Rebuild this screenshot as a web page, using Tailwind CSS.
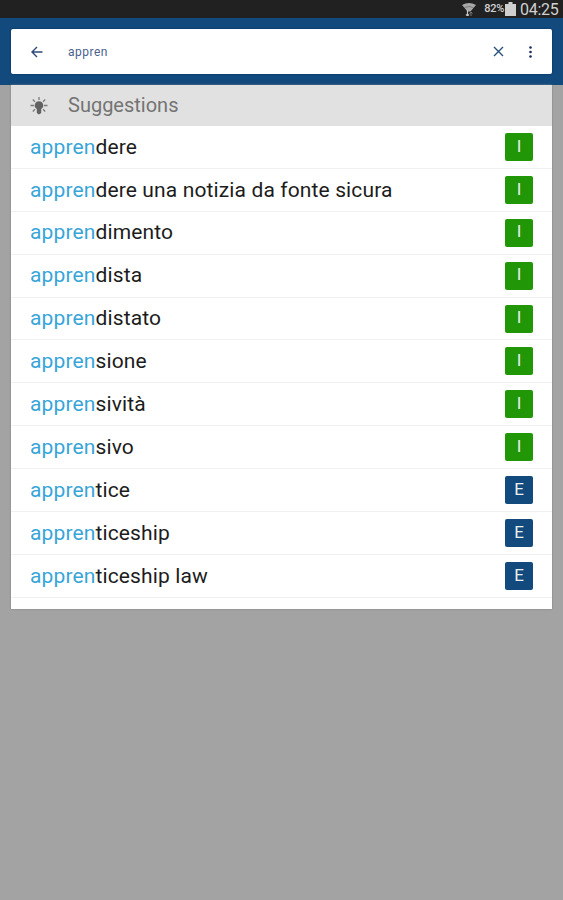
<!DOCTYPE html>
<html lang="it">

<head>
    <meta charset="UTF-8">
    <meta name="viewport" content="width=device-width, initial-scale=1.0">
    <title>Dictionary</title>
    <script src="https://cdn.jsdelivr.net/npm/@tailwindcss/browser@4"></script>
</head>

<body class="h-screen overflow-hidden bg-[#a3a3a3] font-['Roboto',sans-serif]">
    <!-- Status bar -->
    <div class="flex h-[18px] items-center justify-end bg-[#212121] pr-[4px] text-[#d0d0d0]">
        <svg class="mr-[8px] h-[14px] w-[14px]" viewBox="0 0 14 14" fill="none">
            <path d="M0 3Q7-1 14 3L8.500 9.500H5.500Z" fill="#a8a8a8" />
            <path d="M2.500 5.500Q7 3.500 11.500 5.500" stroke="#6e6e6e" stroke-width="0.800" />
            <path d="M5.500 8V14M4 12.500L5.500 14L7 12.500" stroke="#c4c4c4" stroke-width="1.200" />
            <path d="M9 14V10M7.500 11.500L9 10L10.500 11.500" stroke="#777777" />
        </svg>
        <span class="text-[11px] font-medium tracking-[-0.3px]">82%</span>
        <svg class="ml-[1px] mr-[4px] h-[14px] w-[11px]" viewBox="0 0 11 14" fill="#cfcfcf">
            <path d="M3.500 0H7.500V2H11V14H0V2H3.500Z" />
        </svg>
        <span class="w-[39px] whitespace-nowrap pt-[1px] text-[16px] tracking-[-0.25px]">04:25</span>
    </div>

    <!-- Search bar -->
    <header class="h-[67px] bg-[#124a7d] pl-[11px] pr-[11px] pt-[11px]">
        <div class="flex h-[45px] items-center rounded-[2px] bg-white pl-[20px] pr-[20px] shadow-[0_0_2px_#062c58]">
            <svg class="h-[12px] w-[12px]" viewBox="0 0 12 12" fill="none" stroke="#2d4a78" stroke-width="1.400">
                <path d="M11.500 6H1M6 1L1 6L6 11" />
            </svg>
            <span class="ml-[25px] grow pt-[1px] text-[12px] tracking-[0.5px] text-[#4a628f]">appren</span>
            <svg class="mr-[25px] h-[11px] w-[11px]" viewBox="0 0 11 11" stroke="#27507c" stroke-width="1.400">
                <path d="M1 1L10 10M10 1L1 10" />
            </svg>
            <svg class="h-[12px] w-[3px]" viewBox="0 0 3 12" fill="#1d2a5c">
                <circle cx="1.500" cy="1.500" r="1.300" />
                <circle cx="1.500" cy="6" r="1.300" />
                <circle cx="1.500" cy="10.500" r="1.300" />
            </svg>
        </div>
    </header>

    <!-- Suggestions -->
    <main class="mx-[11px] h-[524px] w-[541px] bg-white shadow-[0_0_2px_#808080]">
        <div class="flex h-[41px] items-center bg-[#e1e1e1] pl-[19px]">
            <svg class="h-[18px] w-[18px]" viewBox="0 0 18 18" fill="none" stroke="#7b7b7b" stroke-width="1.300">
                <path d="M9 0V3M2.800 2.500L5 4.700M15.200 2.500L13 4.700M0.500 8.500H4M14 8.500H17.500M2.800 14.500L5 12.300M15.200 14.500L13 12.300" />
                <path d="M9 4.200A4.200 4.200 0 0 0 6.800 12V16L9 17.500L11.200 16V12A4.200 4.200 0 0 0 9 4.200Z" fill="#626262" stroke="none" />
            </svg>
            <h2 class="ml-[20px] pb-[2px] text-[20px] text-[#747474]">Suggestions</h2>
        </div>
        <ul id="suggestions"></ul>
    </main>

    <script>
        const query = "appren";
        const words = [
            ["dere", "I"],
            ["dere una notizia da fonte sicura", "I"],
            ["dimento", "I"],
            ["dista", "I"],
            ["distato", "I"],
            ["sione", "I"],
            ["sività", "I"],
            ["sivo", "I"],
            ["tice", "E"],
            ["ticeship", "E"],
            ["ticeship law", "E"],
        ];

        document.getElementById("suggestions").innerHTML = words.map(([rest, lang]) => `
            <li class="flex h-[42.9px] items-center justify-between border-b border-[#f1f1f1] pl-[19px] pr-[19px]">
                <span class="pt-[1px] text-[21px] tracking-[0.13px] text-[#1c1c1c]"><span class="text-[#38a5d8]">${query}</span>${rest}</span>
                <span class="flex h-[28px] w-[28px] items-center justify-center rounded-[2px] pb-[1px] text-[17px] text-[#e8f0ee] ${lang === "I" ? "bg-[#219606]" : "bg-[#124a7d]"}">${lang}</span>
            </li>`).join("");
    </script>
</body>

</html>
